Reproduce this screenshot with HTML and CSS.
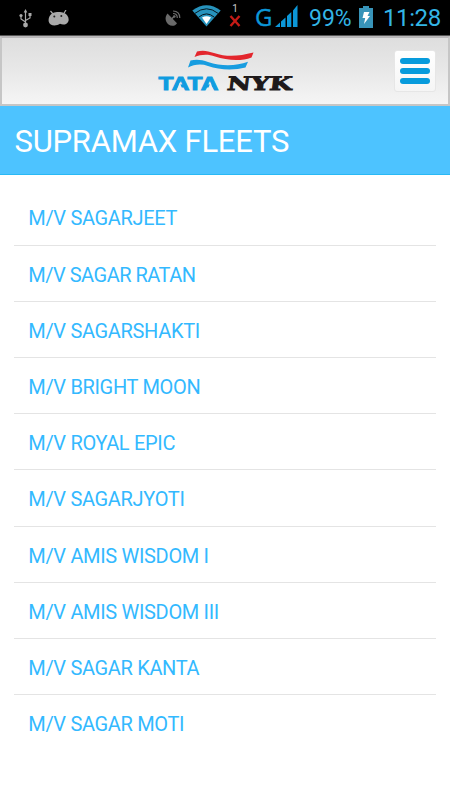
FILE: index.html
```html
<!DOCTYPE html>
<html lang="en">
<head>
<meta charset="utf-8">
<title>Supramax Fleets</title>
<link rel="stylesheet" href="styles.css">
</head>
<body>
<div class="status">
  <svg class="usb" width="16" height="20" viewBox="0 0 16 20" fill="none" stroke="#a9a9a9" stroke-width="1.2">
    <path d="M7.500 3V16M7.500 13L3 10V6.500M7.500 11.500L12 9V5"/>
    <path d="M7.500 0L9.300 3.500H5.700ZM10.500 4h3v3h-3z" fill="#a9a9a9" stroke="none"/>
    <circle cx="3" cy="6.500" r="1.600" fill="#a9a9a9" stroke="none"/>
    <circle cx="7.500" cy="16" r="2.400" fill="#a9a9a9" stroke="none"/>
  </svg>
  <svg class="droid" width="22" height="16" viewBox="0 0 22 16">
    <path d="M2.500 1L5 4M18 0L15.500 4" stroke="#aaa" stroke-width="1.200"/>
    <path d="M5 3C8 1.800 13 1.800 16 3C19.500 4.200 21.200 8 20.500 11C19.500 14.500 15 15.500 12 13.800C8 16.500 1.500 16 .7 11.500C.2 8 1.500 4.500 5 3Z" fill="#aaa"/>
    <circle cx="6.300" cy="6.500" r="1" fill="#222"/><circle cx="13.300" cy="6" r="1" fill="#222"/>
  </svg>
  <svg class="dish" width="16" height="17" viewBox="0 0 16 17" fill="none" stroke="#6a6a6a">
    <path d="M2.500 3.500C-.5 7 .2 12 3.500 14.500C6.500 16.700 10.500 16 12 13.200Z" fill="#6a6a6a" stroke="none"/>
    <path d="M6.500 9L9.500 6" stroke-width="1.500"/><circle cx="9.300" cy="6.500" r="1.300" fill="#6a6a6a" stroke="none"/>
    <path d="M8 3.500C11 3.500 12.300 5 12.300 8M8 1C12.500 1 14.800 3.500 14.800 8" stroke-width="1.200"/>
  </svg>
  <svg class="wifi" width="29" height="22" viewBox="0 0 29 22">
    <path d="M.3 5.500Q14.500-5 28.700 5.500L14.500 21.500Z" fill="#2793bd"/>
    <path d="M3 8.300Q14.500-.7 26 8.300M6.500 12.300Q14.500 5.500 22.500 12.300" fill="none" stroke="#04131a" stroke-width="1"/>
    <path d="M10 12.500Q14.500 10.200 19 12.500L14.500 19Z" fill="#fff"/>
  </svg>
  <div class="sim"><span>1</span>
    <svg width="12" height="12" viewBox="0 0 12 12"><path d="M1.500 1L10.500 11M10.500 1L1.500 11" stroke="#c51a16" stroke-width="2.400"/></svg>
  </div>
  <span class="net">G</span>
  <svg class="signal" width="23" height="22" viewBox="0 0 23 22" fill="#0c97d8">
    <path d="M0 22L5 17.500V22ZM6 16.500L10.500 12.500V22H6ZM12 11L16.300 7V22H12ZM18 5.500L22.500 0V22H18Z"/>
  </svg>
  <span class="pct">99%</span>
  <svg class="battery" width="14" height="22" viewBox="0 0 14 22">
    <path d="M4 0H10V2H14V22H0V2H4Z" fill="#3894b9"/>
    <path d="M5 6H10.500L8.500 10H11L5 18L6.200 12H3.500Z" fill="#fff"/>
  </svg>
  <span class="clock">11:28</span>
</div>
<header class="bar">
  <svg class="logo" width="138" height="52" viewBox="0 0 138 52">
    <path d="M40 3.500C46 1.700 51 3 57 5C71 9.500 82 8 96.500 4.500L94.500 9.500C84 13.500 70 12.500 58 8.500C51 6 44 6.500 37.500 9Z" fill="#e3262d"/>
    <path d="M33.500 12.500C40 11.200 45 12 51 14C65 18.500 79 18 91 13.800L88.500 19.500C77 22.500 62 22 51 18C44 15.500 37 16.500 31 19.500Z" fill="#189de0"/>
    <text class="tata" x="1.500" y="42" textLength="60" lengthAdjust="spacingAndGlyphs">TATA</text>
    <path class="gap" d="M22.700 34.500L26 43H19.400ZM53.500 34.500L56.800 43H50.200Z"/>
    <text class="nyk" transform="translate(69.500 41.700) skewX(-7)" textLength="65" lengthAdjust="spacingAndGlyphs">NYK</text>
  </svg>
  <button class="menu" aria-label="Menu"><i></i><i></i><i></i></button>
</header>
<h1>SUPRAMAX FLEETS</h1>
<ul>
  <li>M/V SAGARJEET</li>
  <li class="wide">M/V SAGAR RATAN</li>
  <li>M/V SAGARSHAKTI</li>
  <li>M/V BRIGHT MOON</li>
  <li>M/V ROYAL EPIC</li>
  <li>M/V SAGARJYOTI</li>
  <li>M/V AMIS WISDOM I</li>
  <li>M/V AMIS WISDOM III</li>
  <li>M/V SAGAR KANTA</li>
  <li>M/V SAGAR MOTI</li>
</ul>
</body>
</html>
```
FILE: styles.css
```css
* { box-sizing: border-box; }
body { margin: 0; background: #fff; font-family: Roboto, sans-serif; height: 800px; overflow: hidden; }
.status { height: 36px; background: #000; display: flex; align-items: flex-start; color: #33b5e5; line-height: 37px; white-space: nowrap; border-bottom: 1px solid #555; }
.status svg { flex: none; display: block; }
.status .usb { margin: 9px 0 0 18px; }
.status .droid { margin: 10px 0 0 14px; }
.status .dish { margin: 10px 0 0 95px; }
.status .wifi { margin: 5px 0 0 11px; }
.sim { width: 12px; margin: 5px 0 0 8px; }
.sim span { display: block; font-size: 10px; line-height: 8px; height: 10px; color: #ccc; text-align: center; }
.net { font: 24px/34px "Open Sans", sans-serif; color: #0c97d8; width: 20px; margin-left: 14px; -webkit-text-stroke: .4px #0c97d8; }
.status .signal { margin: 5px 0 0 0; }
.pct { font-size: 23px; margin-left: 11px; width: 45px; letter-spacing: 0; }
.status .battery { margin: 6px 0 0 5px; }
.clock { font-size: 24px; margin-left: 10px; letter-spacing: -.4px; }
.bar { height: 70px; border: 2px solid #c6c6c6; border-top-color: #b9b7b9; background: linear-gradient(#dedede, #e8e8e8 50%, #f5f5f5); display: flex; }
.logo { margin: 10px 0 0 155px; display: block; flex: none; }
.tata { font: bold 19px "Liberation Sans", sans-serif; fill: #109ce0; stroke: #109ce0; stroke-width: .9; }
.gap { fill: #eee; }
.nyk { font: bold 18.5px "DejaVu Serif", serif; fill: #1d191a; stroke: #1d191a; stroke-width: .9; }
.menu { width: 42px; height: 42px; margin: 12px 0 0 99px; padding: 0 6px; border: 1px solid #e6e6e6; border-radius: 3px; background: linear-gradient(#fff, #f5f5f5); display: flex; flex-direction: column; justify-content: center; gap: 4px; }
.menu i { height: 6px; border-radius: 3px; background: #079bdc; width: 30px; margin-left: -1px; }
h1 { margin: 0; height: 69px; padding-left: 14.5px; background: #4dc3ff; border-bottom: 1px solid #29b9f5; color: #fff; font-size: 31px; font-weight: 400; letter-spacing: -.23px; line-height: 72px; white-space: nowrap; }
ul { list-style: none; margin: 14.4px 14px 0; padding: 0; }
li { height: 56.2px; padding-left: 14.3px; border-bottom: 1px solid #e4e4e4; color: #33b9ff; font-size: 20px; letter-spacing: -.33px; line-height: 58px; }
li:last-child { border: 0; }
.wide { letter-spacing: -.5px; }
```
